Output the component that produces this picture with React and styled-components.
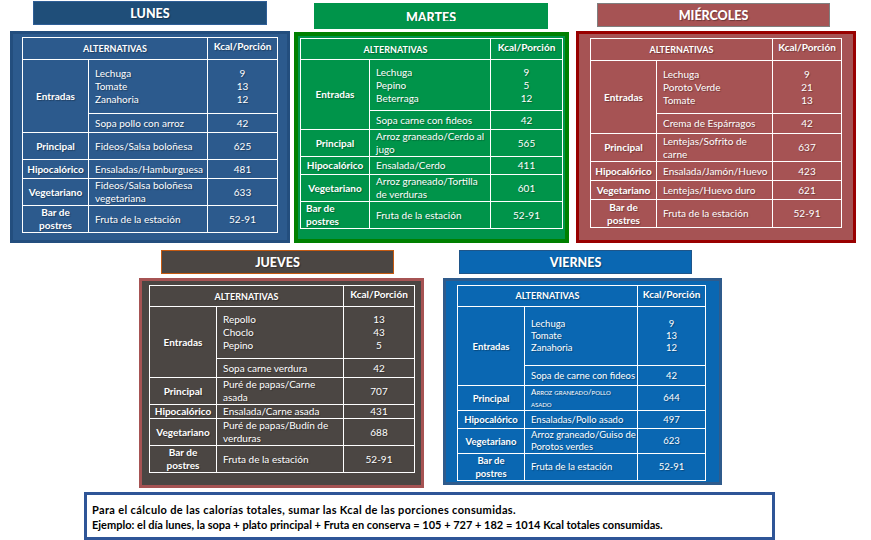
import React from "react";
import styled, { createGlobalStyle } from "styled-components";

const Global = createGlobalStyle`
  html, body { margin: 0; padding: 0; background: #ffffff; }
  body { font-family: Lato, "Open Sans", sans-serif; width: 871px; height: 540px; overflow: hidden; }
  * { box-sizing: border-box; }
`;

const Page = styled.div`
  width: 871px;
  height: 540px;
  display: flex;
  flex-direction: column;
`;

const Row = styled.div`
  display: flex;
  align-items: flex-start;
  margin-top: ${(p) => p.$top}px;
`;

const DayBlock = styled.section`
  display: flex;
  flex-direction: column;
  margin-left: ${(p) => p.$left}px;
`;

const Title = styled.div`
  width: ${(p) => p.$w}px;
  height: ${(p) => p.$h}px;
  margin-left: ${(p) => p.$x}px;
  margin-top: ${(p) => p.$top}px;
  background: ${(p) => p.$bg};
  border: 1px solid ${(p) => p.$border};
  display: flex;
  justify-content: center;
  align-items: ${(p) => (p.$clip ? "flex-start" : "center")};
  padding-top: ${(p) => (p.$clip ? 6 : 0)}px;
  color: #ffffff;
  font-weight: 900;
  font-size: 12.5px;
  text-shadow: 1px 1px 1px rgba(0, 0, 0, 0.35);
`;

const ClipText = styled.span`
  display: block;
  height: 11px;
  line-height: 16px;
  overflow: hidden;
`;

const Panel = styled.div`
  width: ${(p) => p.$w}px;
  height: ${(p) => p.$h}px;
  margin-top: ${(p) => p.$gap}px;
  background: ${(p) => p.$bg};
  border: ${(p) => p.$bw}px solid ${(p) => p.$border};
  padding-left: ${(p) => p.$px}px;
  padding-top: ${(p) => p.$py}px;
`;

const Table = styled.table`
  border-collapse: collapse;
  table-layout: fixed;
  width: ${(p) => p.$w}px;
  color: #ffffff;
  font-size: ${(p) => p.$fs}px;
  line-height: ${(p) => p.$lh}px;
  text-shadow: 1px 1px 1px rgba(0, 0, 0, 0.3);
`;

const Cell = styled.td`
  border: 1px solid #ffffff;
  padding: 0;
  vertical-align: middle;
`;

const HeadCell = styled(Cell)`
  text-align: center;
  font-weight: 700;
  font-size: 9px;
`;

const KcalHead = styled(Cell)`
  text-align: center;
  font-weight: 700;
  font-size: 10px;
  vertical-align: top;
  padding-top: 2px;
`;

const Label = styled(Cell)`
  text-align: ${(p) => (p.$left ? "left" : "center")};
  padding-left: ${(p) => (p.$left ? 5 : 0)}px;
  font-weight: 700;
  white-space: pre-line;
  line-height: 13px;
`;

const Item = styled(Cell)`
  padding-left: 6px;
  white-space: pre-line;
`;

const SmallCaps = styled.span`
  font-variant: small-caps;
  font-size: 8px;
  line-height: 12px;
  display: block;
`;

const Num = styled(Cell)`
  text-align: center;
  white-space: pre-line;
`;

const Footer = styled.div`
  margin-top: 4px;
  margin-left: 84px;
  width: 691px;
  height: 48px;
  border: 3px solid #2f5597;
  padding: 7px 0 0 5px;
  font-weight: 700;
  font-size: 11px;
  line-height: 15px;
  color: #000000;
`;

const FooterLine = styled.div`
  letter-spacing: ${(p) => p.$ls}px;
  white-space: nowrap;
`;

function DayTable({ d }) {
  const [h0, h1, h2, h3, h4, h5, h6] = d.rows;
  return (
    <Table $w={d.tw} $fs={d.fs || 10} $lh={d.lh || 13}>
      <colgroup>
        {d.cols.map((c, i) => (
          <col key={i} style={{ width: c }} />
        ))}
      </colgroup>
      <tbody>
        <tr style={{ height: h0 }}>
          <HeadCell colSpan={2}>ALTERNATIVAS</HeadCell>
          <KcalHead>Kcal/Porción</KcalHead>
        </tr>
        <tr style={{ height: h1 }}>
          <Label rowSpan={2}>Entradas</Label>
          <Item>{d.entradas.map((e) => e[0]).join("\n")}</Item>
          <Num>{d.entradas.map((e) => e[1]).join("\n")}</Num>
        </tr>
        <tr style={{ height: h2 }}>
          <Item>{d.sopa[0]}</Item>
          <Num>{d.sopa[1]}</Num>
        </tr>
        {d.items.map((it, i) => (
          <tr key={it[0]} style={{ height: [h3, h4, h5, h6][i] }}>
            <Label $left={it[0].startsWith("Bar") && d.postresLeft}>{it[0]}</Label>
            <Item>{it[3] ? <SmallCaps>{it[1]}</SmallCaps> : it[1]}</Item>
            <Num>{it[2]}</Num>
          </tr>
        ))}
      </tbody>
    </Table>
  );
}

function Day({ d }) {
  return (
    <DayBlock $left={d.left}>
      <Title
        $w={d.title.w}
        $h={d.title.h}
        $x={d.title.x}
        $top={d.title.top}
        $bg={d.title.bg}
        $border={d.title.border}
        $clip={d.title.clip}
      >
        {d.title.clip ? <ClipText>{d.name}</ClipText> : d.name}
      </Title>
      <Panel
        $w={d.panel.w}
        $h={d.panel.h}
        $gap={d.panel.gap}
        $bg={d.panel.bg}
        $border={d.panel.border}
        $bw={d.panel.bw}
        $px={d.panel.px}
        $py={d.panel.py}
      >
        <DayTable d={d} />
      </Panel>
    </DayBlock>
  );
}

const row1 = [
  {
    name: "LUNES",
    left: 10,
    title: { w: 234, h: 24, x: 23, top: 1, bg: "#1f4e79", border: "#2f5f97" },
    panel: { w: 280, h: 212, gap: 6, bg: "#2c5a8d", border: "#234e7e", bw: 3, px: 9, py: 3 },
    tw: 255,
    cols: [66, 119, 70],
    rows: [22, 54, 19, 27, 19, 27, 26],
    entradas: [["Lechuga", "9"], ["Tomate", "13"], ["Zanahoria", "12"]],
    sopa: ["Sopa pollo con arroz", "42"],
    items: [
      ["Principal", "Fideos/Salsa boloñesa", "625"],
      ["Hipocalórico", "Ensaladas/Hamburguesa", "481"],
      ["Vegetariano", "Fideos/Salsa boloñesa\nvegetariana", "633"],
      ["Bar de\npostres", "Fruta de la estación", "52-91"],
    ],
  },
  {
    name: "MARTES",
    left: 4,
    title: { w: 234, h: 26, x: 20, top: 3, bg: "#00944a", border: "#00944a", clip: true },
    panel: { w: 275, h: 211, gap: 3, bg: "#00944a", border: "#008000", bw: 4, px: 2, py: 2 },
    tw: 262,
    cols: [69, 121, 72],
    rows: [21, 51, 19, 27, 18, 27, 26],
    postresLeft: true,
    entradas: [["Lechuga", "9"], ["Pepino", "5"], ["Beterraga", "12"]],
    sopa: ["Sopa carne con fideos", "42"],
    items: [
      ["Principal", "Arroz graneado/Cerdo al\njugo", "565"],
      ["Hipocalórico", "Ensalada/Cerdo", "411"],
      ["Vegetariano", "Arroz graneado/Tortilla\nde verduras", "601"],
      ["Bar de\npostres", "Fruta de la estación", "52-91"],
    ],
  },
  {
    name: "MIÉRCOLES",
    left: 7,
    title: { w: 233, h: 24, x: 21, top: 3, bg: "#a65354", border: "#7f7f7f" },
    panel: { w: 280, h: 212, gap: 4, bg: "#a65354", border: "#990000", bw: 3, px: 11, py: 4 },
    tw: 251,
    cols: [66, 116, 69],
    rows: [22, 53, 20, 28, 19, 19, 28],
    entradas: [["Lechuga", "9"], ["Poroto Verde", "21"], ["Tomate", "13"]],
    sopa: ["Crema de Espárragos", "42"],
    items: [
      ["Principal", "Lentejas/Sofrito de\ncarne", "637"],
      ["Hipocalórico", "Ensalada/Jamón/Huevo", "423"],
      ["Vegetariano", "Lentejas/Huevo duro", "621"],
      ["Bar de\npostres", "Fruta de la estación", "52-91"],
    ],
  },
];

const row2 = [
  {
    name: "JUEVES",
    left: 139,
    title: { w: 233, h: 24, x: 22, top: 0, bg: "#4b4643", border: "#c55a11" },
    panel: { w: 285, h: 210, gap: 4, bg: "#4b4643", border: "#a65353", bw: 3, px: 7, py: 4 },
    tw: 265,
    cols: [67, 127, 71],
    rows: [21, 52, 19, 27, 14, 27, 27],
    entradas: [["Repollo", "13"], ["Choclo", "43"], ["Pepino", "5"]],
    sopa: ["Sopa carne verdura", "42"],
    items: [
      ["Principal", "Puré de papas/Carne\nasada", "707"],
      ["Hipocalórico", "Ensalada/Carne asada", "431"],
      ["Vegetariano", "Puré de papas/Budín de\nverduras", "688"],
      ["Bar de\npostres", "Fruta de la estación", "52-91"],
    ],
  },
  {
    name: "VIERNES",
    left: 19,
    title: { w: 233, h: 24, x: 16, top: 0, bg: "#0a67b2", border: "#1f5589" },
    panel: { w: 279, h: 207, gap: 4, bg: "#0a67b2", border: "#2f5b8c", bw: 3, px: 11, py: 4 },
    tw: 248,
    fs: 9.5,
    lh: 12,
    cols: [67, 113, 68],
    rows: [21, 59, 20, 24, 18, 24, 24],
    entradas: [["Lechuga", "9"], ["Tomate", "13"], ["Zanahoria", "12"]],
    sopa: ["Sopa de carne con fideos", "42"],
    items: [
      ["Principal", "Arroz graneado/pollo\nasado", "644", true],
      ["Hipocalórico", "Ensaladas/Pollo asado", "497"],
      ["Vegetariano", "Arroz graneado/Guiso de\nPorotos verdes", "623"],
      ["Bar de\npostres", "Fruta de la estación", "52-91"],
    ],
  },
];

export default function App() {
  return (
    <>
      <Global />
      <Page>
        <Row $top={0}>
          {row1.map((d) => (
            <Day key={d.name} d={d} />
          ))}
        </Row>
        <Row $top={7}>
          {row2.map((d) => (
            <Day key={d.name} d={d} />
          ))}
        </Row>
        <Footer>
          <FooterLine $ls={0.35}>
            Para el cálculo de las calorías totales, sumar las Kcal de las porciones consumidas.
          </FooterLine>
          <FooterLine $ls={0}>
            Ejemplo: el día lunes, la sopa + plato principal + Fruta en conserva = 105 + 727 + 182 = 1014 Kcal totales consumidas.
          </FooterLine>
        </Footer>
      </Page>
    </>
  );
}
